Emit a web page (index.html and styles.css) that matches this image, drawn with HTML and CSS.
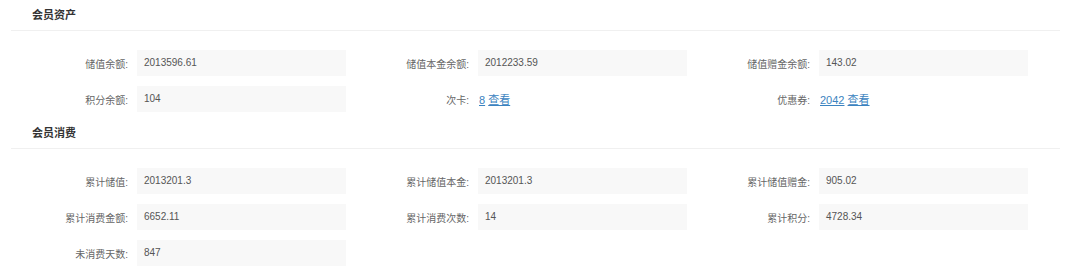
FILE: index.html
```html
<!DOCTYPE html>
<html lang="zh-CN">
<head>
    <meta charset="UTF-8">
    <title>会员信息</title>
    <link rel="stylesheet" href="styles.css">
</head>
<body>
<div class="section">
    <div class="section-title">会员资产</div>
    <div class="field-grid">
        <div class="field"><span class="label">储值余额:</span><span class="value">2013596.61</span></div>
        <div class="field"><span class="label">储值本金余额:</span><span class="value">2012233.59</span></div>
        <div class="field"><span class="label">储值赠金余额:</span><span class="value">143.02</span></div>
        <div class="field"><span class="label">积分余额:</span><span class="value">104</span></div>
        <div class="field"><span class="label">次卡:</span><span class="links"><a href="#">8</a> <a href="#">查看</a></span></div>
        <div class="field"><span class="label">优惠券:</span><span class="links"><a href="#">2042</a> <a href="#">查看</a></span></div>
    </div>
</div>
<div class="section">
    <div class="section-title">会员消费</div>
    <div class="field-grid">
        <div class="field"><span class="label">累计储值:</span><span class="value">2013201.3</span></div>
        <div class="field"><span class="label">累计储值本金:</span><span class="value">2013201.3</span></div>
        <div class="field"><span class="label">累计储值赠金:</span><span class="value">905.02</span></div>
        <div class="field"><span class="label">累计消费金额:</span><span class="value">6652.11</span></div>
        <div class="field"><span class="label">累计消费次数:</span><span class="value">14</span></div>
        <div class="field"><span class="label">累计积分:</span><span class="value">4728.34</span></div>
        <div class="field"><span class="label">未消费天数:</span><span class="value">847</span></div>
    </div>
</div>
</body>
</html>
```

FILE: styles.css
```css
html, body{
    margin:0px;
    padding:0px;
    background:#ffffff;
}
body{
    font-family:"Liberation Sans", "Noto Sans CJK SC", sans-serif;
    color:#555;
}
.section{
    margin:0px 20px 6px 11px;
}
.section-title{
    height:30px;
    line-height:30px;
    padding-left:21px;
    font-size:11px;
    font-weight:bold;
    color:#333;
    border-bottom:1px solid #f0f0f0;
}
.field-grid{
    display:grid;
    grid-template-columns:repeat(3, 341px);
    row-gap:10px;
    padding-top:19px;
}
.field{
    display:flex;
    align-items:center;
    height:26px;
}
.label{
    width:117px;
    padding-right:9px;
    text-align:right;
    font-size:10px;
    color:#666;
}
.value{
    box-sizing:border-box;
    width:209px;
    height:26px;
    line-height:26px;
    padding-left:7px;
    background:#f8f8f8;
    font-size:10px;
    color:#555;
}
.links{
    padding-left:1px;
    font-size:11px;
}
.links a{
    color:#3b83c0;
    text-decoration:underline;
}
```
